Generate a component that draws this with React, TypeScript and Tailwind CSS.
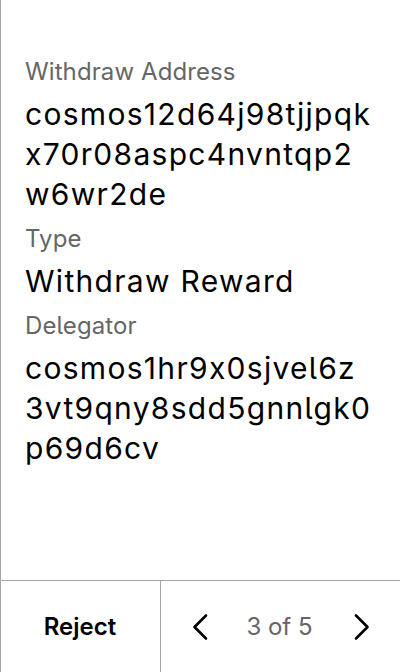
import React from 'react';

// address values are split where the original wraps them
const fields = [
  { label: 'Withdraw Address', lines: ['cosmos12d64j98tjjpqk', 'x70r08aspc4nvntqp2', 'w6wr2de'] },
  { label: 'Type', lines: ['Withdraw Reward'] },
  { label: 'Delegator', lines: ['cosmos1hr9x0sjvel6z', '3vt9qny8sdd5gnnlgk0', 'p69d6cv'] },
];

const Chevron: React.FC<{ dir: 'left' | 'right' }> = ({ dir }) => (
  <svg width="16" height="28" viewBox="0 0 16 28" fill="none" stroke="currentColor" strokeWidth="2.6" strokeLinecap="round" strokeLinejoin="round">
    {dir === 'left' ? <polyline points="14,2.5 2.5,14 14,25.5" /> : <polyline points="2,2.5 13.5,14 2,25.5" />}
  </svg>
);

const App: React.FC = () => {
  return (
    <div className="w-[400px] h-[672px] bg-white flex flex-col border-l border-[#a5a5a5] text-black font-['Inter','Noto_Sans',sans-serif] [font-feature-settings:'calt'_0,'cv05'_1]">
      <div className="flex-1 pt-[50px] pl-[24px]">
        {fields.map((f) => (
          <div key={f.label} className="mb-[3px]">
            <div className="text-[24px] leading-[44px] text-[#666] tracking-[0.1px]">{f.label}</div>
            {f.lines.map((l) => (
              <div key={l} className="text-[30px] leading-[40px] tracking-[1.3px]">
                {l}
              </div>
            ))}
          </div>
        ))}
      </div>

      {/* footer: reject + pager */}
      <div className="h-[92px] border-t border-[#a5a5a5] flex">
        <button className="w-[160px] border-r border-[#a5a5a5] text-[24px] font-semibold pr-[1px]">
          Reject
        </button>
        <div className="flex-1 flex items-center justify-between pl-[31px] pr-[30px]">
          <Chevron dir="left" />
          <span className="text-[24px] text-[#666] pr-[3px]">3 of 5</span>
          <Chevron dir="right" />
        </div>
      </div>
    </div>
  );
};

export default App;
